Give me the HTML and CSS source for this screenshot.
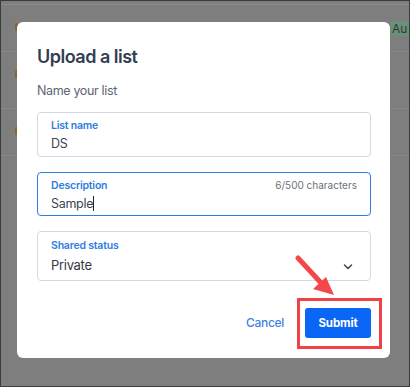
FILE: index.html
```html
<!DOCTYPE html>
<html lang="en">
<head>
  <meta charset="UTF-8" />
  <meta name="viewport" content="width=device-width, initial-scale=1.0"/>
  <title>Upload a list</title>
  <link rel="stylesheet" href="styles.css">
</head>
<body>
  <div class="screen">
    <!-- page behind the overlay -->
    <div class="page">
      <div class="page-head"></div>
      <div class="page-row"><span class="dot"></span><span class="badge">Au</span></div>
      <div class="page-row tall"><span class="dot"></span></div>
      <div class="page-row"><span class="dot"></span></div>
    </div>

    <div class="overlay">
      <div class="modal">
        <h1>Upload a list</h1>
        <p class="hint">Name your list</p>

        <div class="field">
          <label>List name</label>
          <div class="value">DS</div>
        </div>

        <div class="field active">
          <div class="field-top">
            <label>Description</label>
            <span class="count">6/500 characters</span>
          </div>
          <div class="value">Sample<span class="caret"></span></div>
        </div>

        <div class="field select">
          <div>
            <label>Shared status</label>
            <div class="value">Private</div>
          </div>
          <svg class="chevron" width="12" height="8" viewBox="0 0 12 8">
            <path d="M2.5 2 L6 5.5 L9.5 2" fill="none" stroke="#3d4552" stroke-width="1.5" stroke-linecap="round" stroke-linejoin="round"/>
          </svg>
        </div>

        <div class="actions">
          <button class="cancel-button">Cancel</button>
          <button class="submit-button">Submit</button>
        </div>
      </div>

      <!-- annotation -->
      <div class="highlight"></div>
      <svg class="arrow" width="50" height="50" viewBox="0 0 50 50">
        <line x1="4" y1="3" x2="29" y2="30" stroke="#f5474a" stroke-width="5" stroke-linecap="round"/>
        <polygon points="19,34 40,40 32,22" fill="#f5474a"/>
      </svg>
    </div>
  </div>
</body>
</html>
```

FILE: styles.css
```css
* {
  box-sizing: border-box;
}

body {
  margin: 0;
  font-family: 'Inter', 'Liberation Sans', sans-serif;
  background-color: #7f7f7f;
}

.screen {
  position: relative;
  width: 410px;
  height: 387px;
  border: 1px solid #3b3b3b;
  overflow: hidden;
  background-color: #7e7e7e;
}

/* dimmed page */
.page-head {
  height: 4px;
  border-bottom: 1px solid #8c8c8c;
}

.page-row {
  position: relative;
  height: 47px;
  border-bottom: 1px solid #868686;
}

.page-row.tall {
  height: 57px;
}

.dot {
  position: absolute;
  left: 14px;
  top: 18px;
  width: 3px;
  height: 8px;
  border-radius: 2px;
  background-color: #8a6236;
}

.badge {
  position: absolute;
  right: 0;
  top: 16px;
  width: 19px;
  height: 15px;
  padding-left: 2px;
  border-radius: 3px 0 0 3px;
  background-color: #6c8f79;
  color: #2e3d35;
  font-size: 12px;
  line-height: 15px;
}

.overlay {
  position: absolute;
  inset: 0;
  padding: 21px 0 0 16px;
}

/* modal */
.modal {
  width: 373px;
  height: 336px;
  background-color: #ffffff;
  border-radius: 6px;
  padding: 23px 19px 20px 20px;
  display: flex;
  flex-direction: column;
}

h1 {
  margin: 0;
  font-size: 18px;
  font-weight: 600;
  letter-spacing: -0.5px;
  color: #333e50;
  line-height: 24px;
}

.hint {
  margin: 13px 0 13px;
  font-size: 12.5px;
  letter-spacing: -0.35px;
  color: #5c6573;
  line-height: 17px;
}

.field {
  border: 1px solid #d2d9e4;
  border-radius: 4px;
  padding: 5px 13px 0;
  height: 45px;
  margin-bottom: 15px;
}

.field.active {
  border-color: #2f7de1;
}

.field.select {
  height: 50px;
  padding-top: 6px;
  margin-bottom: 27px;
  display: flex;
  justify-content: space-between;
  align-items: flex-start;
}

.field-top {
  display: flex;
  justify-content: space-between;
}

label {
  display: block;
  font-size: 10.5px;
  font-weight: 600;
  letter-spacing: -0.2px;
  color: #2f7de1;
  line-height: 15px;
}

.count {
  font-size: 10px;
  color: #6a717c;
  line-height: 15px;
}

.value {
  font-size: 12.5px;
  letter-spacing: -0.3px;
  color: #3c4452;
  line-height: 20px;
  margin-top: 1px;
}

.select .value {
  font-size: 13px;
  color: #333a45;
  margin-top: 2px;
}

.caret {
  display: inline-block;
  width: 1px;
  height: 15px;
  vertical-align: -3px;
  background-color: #222;
}

.chevron {
  margin-top: 25px;
  margin-right: 3px;
}

.actions {
  display: flex;
  justify-content: flex-end;
  align-items: center;
  gap: 21px;
}

button {
  border: none;
  font-family: inherit;
  cursor: pointer;
}

.cancel-button {
  background: none;
  padding: 0;
  font-size: 12px;
  font-weight: 500;
  letter-spacing: -0.3px;
  color: #3f82e3;
}

.submit-button {
  width: 66px;
  height: 30px;
  border-radius: 3px;
  background-color: #0a66f5;
  color: #ffffff;
  font-size: 11.5px;
  font-weight: 700;
  letter-spacing: -0.1px;
}

.highlight {
  position: absolute;
  left: 296px;
  top: 297px;
  width: 85px;
  height: 51px;
  border: 3px solid #f04246;
}

.arrow {
  position: absolute;
  left: 293px;
  top: 254px;
}
```
